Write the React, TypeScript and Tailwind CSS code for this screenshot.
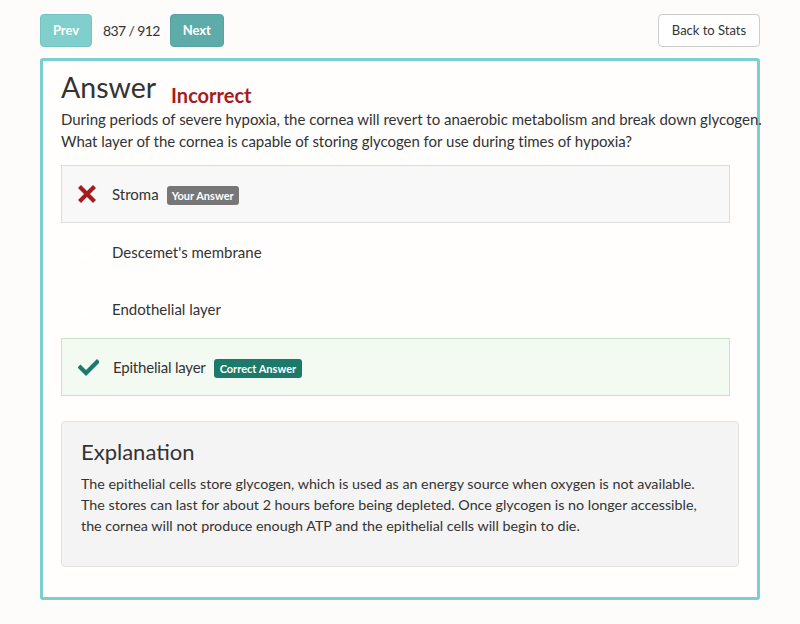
import React from "react";

const XIcon = () => (
  <svg width="18" height="18" viewBox="0 0 18 18">
    <path d="M3 3 L15 15 M15 3 L3 15" stroke="#a41c1c" strokeWidth="4.2" strokeLinecap="square" />
  </svg>
);

const Check = ({ color }: { color: string }) => (
  <svg width="21" height="18" viewBox="0 0 21 18">
    <path d="M2.5 9.5 L8 15 L19 4" stroke={color} strokeWidth="4.2" fill="none" strokeLinecap="square" />
  </svg>
);

export default function App() {
  const font = { fontFamily: "Lato, 'Open Sans', sans-serif" };
  return (
    <div className="w-[800px] h-[624px] bg-[#fdfcfb] text-[#333] pt-[14px] px-[40px]" style={font}>
      <div className="flex items-center h-[33px]">
        <button className="h-[33px] w-[52px] rounded bg-[#80cfcc] border border-[#74c4c1] text-white font-bold text-[13px]">Prev</button>
        <span className="ml-[11px] text-[14px] tracking-[-0.6px] whitespace-nowrap text-[#333]">837 / 912</span>
        <button className="ml-[10px] h-[33px] w-[54px] rounded bg-[#5eacaa] border border-[#56a3a1] text-white font-bold text-[13px]">Next</button>
        <button className="ml-auto h-[33px] w-[102px] rounded bg-white border border-[#ccc] text-[#333] text-[13px]">Back to Stats</button>
      </div>
      <div className="mt-[11px] h-[542px] border-[3px] border-[#7dcfcf] rounded-[3px] bg-[#fffefd] pl-[18px] pr-[4px] pt-[8px]">
        <div className="flex items-end">
          <h1 className="text-[28.5px] leading-[36px] text-[#333]">Answer</h1>
          <span className="ml-[15px] text-[20px] leading-[24px] font-bold text-[#a41c1c] mb-[-2px]">Incorrect</span>
        </div>
        <p className="mt-[3px] text-[15px] leading-[22px] text-[#333] whitespace-nowrap tracking-[-0.02px]">
          During periods of severe hypoxia, the cornea will revert to anaerobic metabolism and break down glycogen.
          <br />
          What layer of the cornea is capable of storing glycogen for use during times of hypoxia?
        </p>
        <div className="mt-[13px] w-[669px] flex flex-col">
          <div className="h-[58px] flex items-center bg-[#f8f8f8] border border-[#dcdcdc] pl-[16px]">
            <div className="w-[34px]"><XIcon /></div>
            <span className="text-[15px]">Stroma</span>
            <span className="ml-[8px] mt-[3px] bg-[#777] text-white font-bold text-[11px] rounded-[3px] px-[5px] h-[19px] leading-[19px]">Your Answer</span>
          </div>
          <div className="h-[58px] flex items-center pl-[17px]">
            <div className="w-[34px]"><Check color="#ffffff" /></div>
            <span className="text-[15px]">Descemet's membrane</span>
          </div>
          <div className="h-[57px] flex items-center pl-[17px]">
            <div className="w-[34px]"><Check color="#ffffff" /></div>
            <span className="text-[15px]">Endothelial layer</span>
          </div>
          <div className="h-[58px] flex items-center bg-[#f3faf2] border border-[#c9e6c4] pl-[16px]">
            <div className="w-[35px]"><Check color="#1b7a69" /></div>
            <span className="text-[15px] tracking-[-0.2px]">Epithelial layer</span>
            <span className="ml-[8px] mt-[3px] bg-[#1b7a69] text-white font-bold text-[11px] rounded-[3px] px-[6px] h-[19px] leading-[19px]">Correct Answer</span>
          </div>
        </div>
        <div className="mt-[25px] w-[678px] h-[146px] bg-[#f4f4f4] border border-[#e2e2e2] rounded-[4px] px-[19px] pt-[17px]">
          <h2 className="text-[22px] leading-[26px] text-[#333]">Explanation</h2>
          <p className="mt-[8px] text-[14.3px] leading-[21px] text-[#333] whitespace-nowrap">
            The epithelial cells store glycogen, which is used as an energy source when oxygen is not available.
            <br />
            The stores can last for about 2 hours before being depleted. Once glycogen is no longer accessible,
            <br />
            the cornea will not produce enough ATP and the epithelial cells will begin to die.
          </p>
        </div>
      </div>
    </div>
  );
}
